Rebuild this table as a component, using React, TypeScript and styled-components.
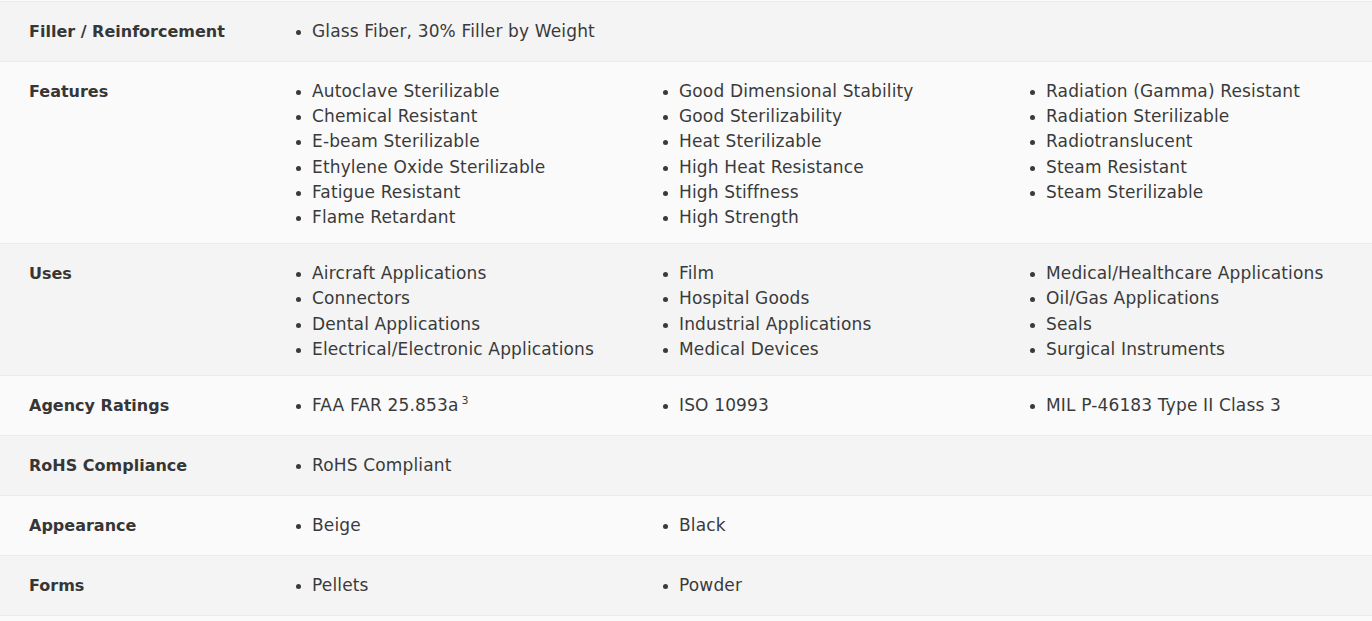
import React from "react";
import styled, { createGlobalStyle } from "styled-components";

const Global = createGlobalStyle`
  html, body { margin: 0; padding: 0; background: #fafafa; }
  body { font-family: "DejaVu Sans", "Open Sans", Arial, sans-serif; color: #3a3a3a; }
`;

const Table = styled.div`
  margin-top: 1px;
  border-top: 1px solid #ebebeb;
  display: flex;
  flex-direction: column;
`;

const Row = styled.div<{ $alt: boolean }>`
  display: grid;
  grid-template-columns: 271px 1fr;
  background: ${(p) => (p.$alt ? "#fafafa" : "#f4f4f4")};
  border-bottom: 1px solid #ebebeb;
  padding: 15px 0 13px;
`;

const Label = styled.div`
  padding: 0 0 2px 29px;
  font-family: "DejaVu Sans", "Open Sans", sans-serif;
  font-weight: 700;
  font-size: 16px;
  line-height: 29px;
  color: #363636;
`;

const Values = styled.div`
  display: grid;
  grid-template-columns: repeat(3, 1fr);
  padding-top: 2px;
`;

const List = styled.ul`
  list-style: none;
  margin: 0;
  padding: 0 0 0 41px;
`;

const Item = styled.li`
  position: relative;
  font-size: 17px;
  letter-spacing: 0.15px;
  line-height: 25.2px;
  color: #3a3a3a;
  white-space: nowrap;
  &::before {
    content: "";
    position: absolute;
    left: -16px;
    top: 11px;
    width: 5px;
    height: 5px;
    border-radius: 50%;
    background: #3a3a3a;
  }
`;

const Sup = styled.sup`
  font-size: 11px;
  letter-spacing: 0;
  margin-left: 3px;
  vertical-align: 7px;
  line-height: 0;
`;

type Cell = (string | { text: string; sup: string })[];

const data: { label: string; cols: Cell[] }[] = [
  { label: "Filler / Reinforcement", cols: [["Glass Fiber, 30% Filler by Weight"]] },
  {
    label: "Features",
    cols: [
      [
        "Autoclave Sterilizable",
        "Chemical Resistant",
        "E-beam Sterilizable",
        "Ethylene Oxide Sterilizable",
        "Fatigue Resistant",
        "Flame Retardant",
      ],
      [
        "Good Dimensional Stability",
        "Good Sterilizability",
        "Heat Sterilizable",
        "High Heat Resistance",
        "High Stiffness",
        "High Strength",
      ],
      [
        "Radiation (Gamma) Resistant",
        "Radiation Sterilizable",
        "Radiotranslucent",
        "Steam Resistant",
        "Steam Sterilizable",
      ],
    ],
  },
  {
    label: "Uses",
    cols: [
      [
        "Aircraft Applications",
        "Connectors",
        "Dental Applications",
        "Electrical/Electronic Applications",
      ],
      ["Film", "Hospital Goods", "Industrial Applications", "Medical Devices"],
      [
        "Medical/Healthcare Applications",
        "Oil/Gas Applications",
        "Seals",
        "Surgical Instruments",
      ],
    ],
  },
  {
    label: "Agency Ratings",
    cols: [
      [{ text: "FAA FAR 25.853a", sup: "3" }],
      ["ISO 10993"],
      ["MIL P-46183 Type II Class 3"],
    ],
  },
  { label: "RoHS Compliance", cols: [["RoHS Compliant"]] },
  { label: "Appearance", cols: [["Beige"], ["Black"]] },
  { label: "Forms", cols: [["Pellets"], ["Powder"]] },
];

export default function App() {
  return (
    <>
      <Global />
      <Table>
        {data.map((row, i) => (
          <Row key={row.label} $alt={i % 2 === 1}>
            <Label>{row.label}</Label>
            <Values>
              {row.cols.map((col, j) => (
                <List key={j}>
                  {col.map((it, k) =>
                    typeof it === "string" ? (
                      <Item key={k}>{it}</Item>
                    ) : (
                      <Item key={k}>
                        {it.text}
                        <Sup>{it.sup}</Sup>
                      </Item>
                    )
                  )}
                </List>
              ))}
            </Values>
          </Row>
        ))}
      </Table>
    </>
  );
}
